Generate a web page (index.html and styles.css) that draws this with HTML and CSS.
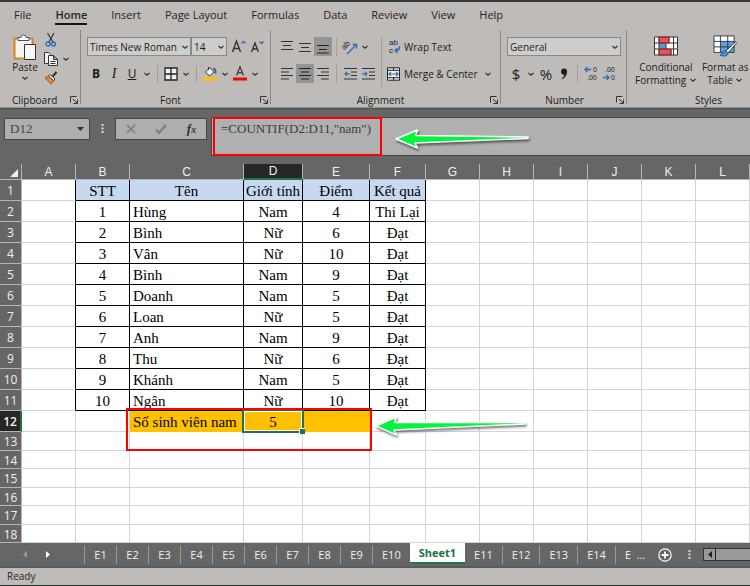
FILE: index.html
```
<!doctype html>
<html lang="vi">
    <head>
        <meta charset="UTF-8" />
        <meta name="viewport" content="width=device-width, initial-scale=1.0" />
        <title>Excel - COUNTIF</title>
        <link rel="stylesheet" href="styles.css">
    </head>
    <body>
        <svg class="defs" width="0" height="0" aria-hidden="true">
            <symbol id="caret" viewBox="0 0 8 8"><path d="M1.500 3L4 5.300 6.500 3" fill="none" stroke="#333" stroke-width="1.200"/></symbol>
            <symbol id="launcher" viewBox="0 0 8 8"><path d="M.5 6.500V.5H6.500M3 3l4 4M7.500 3.500v4h-4" fill="none" stroke="#333"/></symbol>
        </svg>

        <header class="ribbon">
            <nav class="tabs">
                <a href="#">File</a>
                <a href="#" class="active">Home</a>
                <a href="#">Insert</a>
                <a href="#">Page Layout</a>
                <a href="#">Formulas</a>
                <a href="#">Data</a>
                <a href="#">Review</a>
                <a href="#">View</a>
                <a href="#">Help</a>
            </nav>
            <div class="groups">
                <section class="group clipboard">
                    <div class="clip-body">
                        <button class="big">
                            <svg width="24" height="27" viewBox="0 0 24 27">
                                <path d="M1.500 4.500h18v20h-18z" fill="#f3f3f3" stroke="#d9822b" stroke-width="2"/>
                                <path d="M5 6.500V3.500h3a2.500 2.500 0 0 1 5 0h3v3z" fill="#fff" stroke="#555"/>
                                <path d="M11.500 10.500h11v15h-11z" fill="#f4f8f8" stroke="#333"/>
                            </svg>
                            <span>Paste</span>
                            <svg width="8" height="8"><use href="#caret"/></svg>
                        </button>
                        <div class="clip-tools">
                            <button class="tool" aria-label="Cut">
                                <svg width="12" height="14" viewBox="0 0 12 14" fill="none">
                                    <path d="M2.500 0l6 10M9 0L3.500 10" stroke="#333" stroke-width="1.200"/>
                                    <circle cx="3" cy="11" r="2" stroke="#2b6cb8" stroke-width="1.300"/>
                                    <circle cx="8.500" cy="11" r="2" stroke="#2b6cb8" stroke-width="1.300"/>
                                </svg>
                            </button>
                            <div class="row">
                                <button class="tool" aria-label="Copy">
                                    <svg width="14" height="14" viewBox="0 0 14 14" fill="#f3f3f3" stroke="#333">
                                        <path d="M4 11.500H.5V.5h4l2 2"/>
                                        <path d="M4.500 3.500h5l4 4v6h-9zM9.500 3.500v4h4M6.500 9.500h5M6.500 11.500h5"/>
                                    </svg>
                                </button>
                                <button class="caret" aria-label="Copy options"><svg width="8" height="8"><use href="#caret"/></svg></button>
                            </div>
                            <button class="tool" aria-label="Format Painter">
                                <svg width="14" height="14" viewBox="0 0 14 14">
                                    <path d="M1 7l4-2.500 5 5L7 13z" fill="#e8873a" stroke="#a8561c"/>
                                    <path d="M4.500 5L6 3.500l5 4.500-1.500 1.500z" fill="#fff" stroke="#333"/>
                                    <path d="M8.500 5.500L12.500 1" stroke="#333" stroke-width="2"/>
                                </svg>
                            </button>
                        </div>
                    </div>
                    <footer><span>Clipboard</span><svg width="8" height="8"><use href="#launcher"/></svg></footer>
                </section>

                <section class="group font">
                    <div class="rows">
                        <div class="row">
                            <span class="combo font-name">
                                <select aria-label="Font"><option>Times New Roman</option></select>
                                <svg width="8" height="8"><use href="#caret"/></svg>
                            </span>
                            <span class="combo font-size">
                                <select aria-label="Font size"><option>14</option></select>
                                <svg width="8" height="8"><use href="#caret"/></svg>
                            </span>
                            <button class="tool grow" aria-label="Increase font size">
                                <svg width="14" height="16" viewBox="0 0 14 16" fill="none"><path d="M.5 13L4.500 2l4 11M2 9.500h5" stroke="#333" stroke-width="1.400"/><path d="M9.500 4.500l2-2 2 2" stroke="#2b6cb8" stroke-width="1.300"/></svg>
                            </button>
                            <button class="tool" aria-label="Decrease font size">
                                <svg width="14" height="16" viewBox="0 0 14 16" fill="none"><path d="M1.500 13L5 4l3.500 9M3 10h4" stroke="#333" stroke-width="1.300"/><path d="M9.500 2.500l2 2 2-2" stroke="#2b6cb8" stroke-width="1.300"/></svg>
                            </button>
                        </div>
                        <div class="row">
                            <button class="tool"><b>B</b></button>
                            <button class="tool serif"><i>I</i></button>
                            <button class="tool"><u>U</u></button>
                            <button class="caret" aria-label="Underline options"><svg width="8" height="8"><use href="#caret"/></svg></button>
                            <i class="sep"></i>
                            <button class="tool" aria-label="Borders">
                                <svg width="14" height="14" viewBox="0 0 14 14"><path d="M1 1h12v12H1zM7 1v12M1 7h12" fill="#f1f1f1" stroke="#222" stroke-width="1.300"/></svg>
                            </button>
                            <button class="caret" aria-label="Border options"><svg width="8" height="8"><use href="#caret"/></svg></button>
                            <i class="sep"></i>
                            <button class="tool" aria-label="Fill colour">
                                <svg width="14" height="15" viewBox="0 0 14 15">
                                    <path d="M2.500 6L7 1.500l4 4.500L6.500 10z" fill="#f4f4f4" stroke="#333"/>
                                    <path d="M5.500 4V1" stroke="#333"/>
                                    <path d="M10 2.500c2.500 0 3 2 2.500 5" fill="none" stroke="#2b4f9e" stroke-width="1.600"/>
                                    <path d="M0 11.500h14v3H0z" fill="#ffc000"/>
                                </svg>
                            </button>
                            <button class="caret" aria-label="Fill options"><svg width="8" height="8"><use href="#caret"/></svg></button>
                            <button class="tool" aria-label="Font colour">
                                <svg width="14" height="15" viewBox="0 0 14 15"><path d="M3.500 9.500L7 .8l3.500 8.700M4.800 6.800h4.400" fill="none" stroke="#333" stroke-width="1.200"/><path d="M0 11.500h14v3H0z" fill="#f00000"/></svg>
                            </button>
                            <button class="caret" aria-label="Font colour options"><svg width="8" height="8"><use href="#caret"/></svg></button>
                        </div>
                    </div>
                    <footer><span>Font</span><svg width="8" height="8"><use href="#launcher"/></svg></footer>
                </section>

                <section class="group alignment">
                    <div class="split">
                        <div class="rows">
                            <div class="row">
                                <button class="tool" aria-label="Top align"><svg width="12" height="14" viewBox="0 0 12 14"><path d="M0 1.500h12M2 5.500h8M0 9.500h12" stroke="#333" stroke-width="1.200"/></svg></button>
                                <button class="tool" aria-label="Middle align"><svg width="12" height="14" viewBox="0 0 12 14"><path d="M0 3.500h12M2 7.500h8M0 11.500h12" stroke="#333" stroke-width="1.200"/></svg></button>
                                <button class="tool on" aria-label="Bottom align"><svg width="12" height="14" viewBox="0 0 12 14"><path d="M0 5.500h12M2 9.500h8M0 13h12" stroke="#222" stroke-width="1.200"/></svg></button>
                                <i class="sep"></i>
                                <button class="tool" aria-label="Orientation">
                                    <svg width="16" height="16" viewBox="0 0 16 16">
                                        <g transform="rotate(-45 5 7)"><text class="ic ab" x="0" y="8">ab</text></g>
                                        <path d="M5 15L14 6M10.500 5.500h4v4" fill="none" stroke="#2b6cb8" stroke-width="1.300"/>
                                    </svg>
                                </button>
                                <button class="caret" aria-label="Orientation options"><svg width="8" height="8"><use href="#caret"/></svg></button>
                            </div>
                            <div class="row">
                                <button class="tool" aria-label="Align left"><svg width="12" height="14" viewBox="0 0 12 14"><path d="M0 1.500h12M0 5h8M0 8.500h12M0 12h8" stroke="#333" stroke-width="1.200"/></svg></button>
                                <button class="tool on" aria-label="Center"><svg width="12" height="14" viewBox="0 0 12 14"><path d="M0 1.500h12M2 5h8M0 8.500h12M2 12h8" stroke="#222" stroke-width="1.200"/></svg></button>
                                <button class="tool" aria-label="Align right"><svg width="12" height="14" viewBox="0 0 12 14"><path d="M0 1.500h12M4 5h8M0 8.500h12M4 12h8" stroke="#333" stroke-width="1.200"/></svg></button>
                                <i class="sep"></i>
                                <button class="tool" aria-label="Decrease indent"><svg width="13" height="14" viewBox="0 0 13 14" fill="none"><path d="M0 1.500h13M7 5h6M7 8.500h6M0 12h13" stroke="#333" stroke-width="1.200"/><path d="M6 6.800H1M3 4.800l-2 2 2 2" stroke="#2b6cb8" stroke-width="1.200"/></svg></button>
                                <button class="tool" aria-label="Increase indent"><svg width="13" height="14" viewBox="0 0 13 14" fill="none"><path d="M0 1.500h13M7 5h6M7 8.500h6M0 12h13" stroke="#333" stroke-width="1.200"/><path d="M0 6.800h5M3 4.800l2 2-2 2" stroke="#2b6cb8" stroke-width="1.200"/></svg></button>
                            </div>
                        </div>
                        <i class="sep tall"></i>
                        <div class="rows">
                            <button class="wide">
                                <svg width="18" height="17" viewBox="0 0 18 17">
                                    <text class="ic ab" x="3" y="7">ab</text><text class="ic ab" x="3" y="15">c</text>
                                    <path d="M13.500 8v1.500q0 3-3 3H9M11.500 10l-2.500 2.500 2.500 2.500" fill="none" stroke="#2b6cb8" stroke-width="1.300"/>
                                </svg>
                                <span>Wrap Text</span>
                            </button>
                            <div class="row">
                                <button class="wide">
                                    <svg width="18" height="14" viewBox="0 0 18 14">
                                        <path d="M1.500 .8h12v12.400h-12z" fill="#f4f4f4" stroke="#222"/>
                                        <path d="M1.500 3.300h12M1.500 10.700h12M7.500 .8v2.500M7.500 10.700v2.500" stroke="#222"/>
                                        <path d="M2.500 7h10M5 4.800L2.800 7 5 9.200M10 4.800L12.200 7 10 9.200" fill="none" stroke="#2b6cb8" stroke-width="1.200"/>
                                    </svg>
                                    <span>Merge &amp; Center</span>
                                </button>
                                <button class="caret" aria-label="Merge options"><svg width="8" height="8"><use href="#caret"/></svg></button>
                            </div>
                        </div>
                    </div>
                    <footer><span>Alignment</span><svg width="8" height="8"><use href="#launcher"/></svg></footer>
                </section>

                <section class="group number">
                    <div class="rows">
                        <div class="row">
                            <span class="combo format">
                                <select aria-label="Number format"><option>General</option></select>
                                <svg width="8" height="8"><use href="#caret"/></svg>
                            </span>
                        </div>
                        <div class="row">
                            <button class="tool sign">$</button>
                            <button class="caret" aria-label="Currency options"><svg width="8" height="8"><use href="#caret"/></svg></button>
                            <button class="tool sign">%</button>
                            <button class="tool" aria-label="Comma style">
                                <svg width="8" height="12" viewBox="0 0 8 12"><path d="M4 .5a3 3 0 0 1 3 3.300c0 3.500-2 6-5 7.400l-.5-.8c1.800-1 2.700-2.200 2.800-3.700A3 3 0 1 1 4 .5z" fill="#1c1c1c"/></svg>
                            </button>
                            <i class="sep"></i>
                            <button class="tool" aria-label="Increase decimal">
                                <svg width="16" height="17" viewBox="0 0 16 17"><text class="ic" x="10" y="7">0</text><text class="ic" x="4" y="15">.00</text><path d="M8 4.500H2M4.500 2L2 4.500 4.500 7" fill="none" stroke="#2b6cb8" stroke-width="1.300"/></svg>
                            </button>
                            <button class="tool" aria-label="Decrease decimal">
                                <svg width="16" height="17" viewBox="0 0 16 17"><text class="ic" x="4" y="7">.00</text><text class="ic" x="10" y="15">0</text><path d="M2 12.500h6M5.500 10L8 12.500 5.500 15" fill="none" stroke="#2b6cb8" stroke-width="1.300"/></svg>
                            </button>
                        </div>
                    </div>
                    <footer><span>Number</span><svg width="8" height="8"><use href="#launcher"/></svg></footer>
                </section>

                <section class="group styles">
                    <div class="style-body">
                        <button class="big">
                            <svg width="24" height="20" viewBox="0 0 24 20">
                                <path d="M.5 1h23v18H.5z" fill="#fff"/>
                                <path d="M5 1h10v6H5zM5 13h12v6H5z" fill="#e0565b"/>
                                <path d="M5 7h7v6H5z" fill="#4f9bdc"/>
                                <path d="M.5 1h23v18H.5zM.5 7h23M.5 13h23M5 1v18M15 1v6M12 7v6M17 13v6M19.500 1v18" fill="none" stroke="#333"/>
                                <path d="M5 1h10v6H5zM5 13h12v6H5z" fill="none" stroke="#b3262b"/>
                            </svg>
                            <span>Conditional<br>Formatting <svg width="8" height="8"><use href="#caret"/></svg></span>
                        </button>
                        <button class="big">
                            <svg width="26" height="24" viewBox="0 0 26 24">
                                <path d="M1 1h22v18H1z" fill="#fff"/>
                                <path d="M8 7h15v12H8z" fill="#5a9fdd"/>
                                <path d="M1 1h22v18H1zM1 7h22M1 13h22M8 1v18M16 1v18" fill="none" stroke="#333"/>
                                <path d="M24.500 7.500L14 17.500l2 2.500 9.500-11z" fill="#fff" stroke="#333"/>
                                <path d="M14 17c-4 0-3 4-6.500 5 4 2 9 1 8.700-2.500z" fill="#3f8fd6" stroke="#1f5f9f"/>
                            </svg>
                            <span>Format as<br>Table <svg width="8" height="8"><use href="#caret"/></svg></span>
                        </button>
                        <button class="big last">Styles</button>
                    </div>
                    <footer><span>Styles</span></footer>
                </section>
            </div>
        </header>

        <div class="formula-bar">
            <div class="name-box">
                <input type="text" value="D12" aria-label="Name box">
                <svg width="7" height="4" viewBox="0 0 7 4"><path d="M0 0h7L3.500 4z" fill="#333"/></svg>
            </div>
            <svg class="grip" width="3" height="11" viewBox="0 0 3 11"><path d="M.5 1h2v2h-2zM.5 4.500h2v2h-2zM.5 8h2v2h-2z" fill="#ddd"/></svg>
            <div class="fx">
                <button aria-label="Cancel"><svg width="10" height="10" viewBox="0 0 10 10"><path d="M1 1l8 8M9 1L1 9" stroke="#7b7b7b" stroke-width="1.600"/></svg></button>
                <button aria-label="Enter"><svg width="12" height="10" viewBox="0 0 12 10"><path d="M1 5.500L4 9l7-8" fill="none" stroke="#7b7b7b" stroke-width="2"/></svg></button>
                <button class="fn">f<small>x</small></button>
            </div>
            <div class="formula">
                <textarea aria-label="Formula" spellcheck="false">=COUNTIF(D2:D11,"nam")</textarea>
                <div class="mark"></div>
                <svg class="pointer" width="142" height="30" viewBox="0 0 142 30">
                    <path d="M3 13L24.500 4l-2 5.500L135 11v1.500L22 17l2.500 5z" fill="#00f53d" stroke="#fff" stroke-width="1.500" stroke-linejoin="round"/>
                </svg>
            </div>
        </div>

        <main class="sheet">
            <table>
                <colgroup>
                    <col class="c-head"><col class="c-std"><col class="c-std"><col class="c-name"><col class="c-sex"><col class="c-score"><col class="c-result"><col class="c-std"><col class="c-std"><col class="c-std"><col class="c-std"><col class="c-std"><col class="c-std"><col>
                </colgroup>
                <thead id="cols"></thead>
                <tbody id="cells"></tbody>
            </table>
            <div class="mark"></div>
            <svg class="pointer" width="158" height="30" viewBox="0 0 158 30">
                <path d="M3 13L23.500 4l-2 5.500L152 9.500V11L21 17l2.500 5z" fill="#00f53d" stroke="#fff" stroke-width="1.500" stroke-linejoin="round"/>
            </svg>
        </main>

        <div class="sheet-bar">
            <div class="sheet-nav">
                <button aria-label="Previous sheet"><svg width="4" height="7" viewBox="0 0 4 7"><path d="M4 0v7L0 3.500z" fill="#999"/></svg></button>
                <button aria-label="Next sheet"><svg width="4" height="7" viewBox="0 0 4 7"><path d="M0 0v7l4-3.500z" fill="#fff"/></svg></button>
            </div>
            <button class="tab">E1</button>
            <button class="tab">E2</button>
            <button class="tab">E3</button>
            <button class="tab">E4</button>
            <button class="tab">E5</button>
            <button class="tab">E6</button>
            <button class="tab">E7</button>
            <button class="tab">E8</button>
            <button class="tab">E9</button>
            <button class="tab">E10</button>
            <button class="tab current">Sheet1</button>
            <button class="tab">E11</button>
            <button class="tab">E12</button>
            <button class="tab">E13</button>
            <button class="tab">E14</button>
            <button class="tab more">E &nbsp;...</button>
            <button class="add" aria-label="New sheet">
                <svg width="14" height="14" viewBox="0 0 14 14"><path d="M7 3.500v7M3.500 7h7" stroke="#fff" stroke-width="1.800"/><circle cx="7" cy="7" r="6.200" fill="none" stroke="#fff" stroke-width="1.200"/></svg>
            </button>
            <svg class="grip" width="3" height="11" viewBox="0 0 3 11"><path d="M.5 1h2v2h-2zM.5 4.500h2v2h-2zM.5 8h2v2h-2z" fill="#ddd"/></svg>
            <div class="scroll">
                <button aria-label="Scroll left"><svg width="4" height="7" viewBox="0 0 4 7"><path d="M4 0v7L0 3.500z" fill="#222"/></svg></button>
            </div>
        </div>

        <div class="status">Ready</div>

        <script src="script.js"></script>
    </body>
</html>
```
FILE: styles.css
```
* {
    box-sizing: border-box;
}
body {
    margin: 0;
    height: 100vh;
    display: flex;
    flex-direction: column;
    overflow: hidden;
    background: #666;
    font-family: "Open Sans", "Noto Sans", sans-serif;
    font-size: 11px;
    line-height: 14px;
    color: #262626;
}
button,
select,
input,
textarea {
    margin: 0;
    padding: 0;
    border: 0;
    background: none;
    font: inherit;
    color: inherit;
}
svg {
    display: block;
    flex: none;
    overflow: visible;
}
.defs {
    position: absolute;
}
.ic {
    font: 7px "Liberation Sans", sans-serif;
    fill: #222;
}
.ic.ab {
    font-size: 8px;
}

/* ribbon */
.ribbon {
    flex: none;
    background: #bfbbb8;
    border-top: 2px solid #3a3a3a;
    border-bottom: 1px solid #999;
}
.tabs {
    display: flex;
    gap: 24px;
    height: 28px;
    padding: 6px 14px 0;
}
.tabs a {
    height: 17px;
    color: #262626;
    text-decoration: none;
    white-space: nowrap;
}
.tabs .active {
    font-weight: 600;
    border-bottom: 2px solid #1c1010;
}
.groups {
    display: flex;
    height: 77px;
    overflow: hidden;
    font-size: 10px;
    color: #1c1c1c;
}
.group {
    flex: none;
    display: flex;
    flex-direction: column;
    justify-content: space-between;
    position: relative;
    padding-top: 7px;
}
.group::after {
    content: "";
    position: absolute;
    right: 0;
    top: 0;
    bottom: 3px;
    border-right: 1px solid #8a8886;
}
.group footer {
    display: flex;
    align-items: center;
    height: 14px;
    padding: 0 3px 0 12px;
}
.group footer span {
    flex: 1;
    text-align: center;
}
.clipboard {
    width: 81px;
}
.clipboard footer span {
    text-align: left;
}
.font {
    width: 190px;
}
.alignment {
    width: 230px;
}
.font footer,
.alignment footer {
    padding-left: 0;
}
.number {
    width: 126px;
}
.styles {
    width: 163px;
}
.styles footer {
    padding-left: 3px;
}
.rows {
    display: flex;
    flex-direction: column;
    gap: 8px;
}
.group > .rows,
.split {
    padding-left: 7px;
}
.number > .rows,
.font > .rows {
    padding-left: 6px;
}
.row {
    display: flex;
    align-items: center;
    height: 19px;
}
.split {
    display: flex;
}
.tool {
    width: 18px;
    height: 19px;
    display: flex;
    align-items: center;
    justify-content: center;
    font-size: 12px;
}
.tool.on {
    background: #969492;
}
.tool.serif {
    font-family: "Liberation Serif", serif;
    font-size: 14px;
}
.tool.sign {
    font-size: 15px;
}
.tool.grow {
    margin-left: 3px;
}
.caret {
    width: 12px;
    height: 19px;
    display: flex;
    align-items: center;
    justify-content: center;
}
.sep {
    width: 1px;
    height: 18px;
    margin: 0 4px;
    background: #a19e9b;
}
.sep.tall {
    height: 50px;
}
.wide {
    display: flex;
    align-items: center;
    height: 19px;
    white-space: nowrap;
}
.wide + .caret {
    margin-left: 4px;
}
.combo {
    position: relative;
    height: 19px;
}
.combo select {
    appearance: none;
    width: 100%;
    height: 19px;
    padding: 0 2px;
    background: #cfcdcb;
    border: 1px solid #8a8886;
    border-radius: 0;
}
.combo svg {
    position: absolute;
    right: 2px;
    top: 6px;
}
.font-name {
    width: 104px;
}
.font-size {
    width: 36px;
}
.format {
    width: 114px;
}
.big {
    display: flex;
    flex-direction: column;
    align-items: center;
    white-space: nowrap;
    line-height: 13px;
}
.clip-body {
    display: flex;
    gap: 3px;
    padding-left: 11px;
    margin-top: -7px;
}
.clip-body .big {
    width: 28px;
    padding-top: 4px;
}
.clip-tools {
    display: flex;
    flex-direction: column;
}
.style-body {
    display: flex;
    align-items: flex-start;
    gap: 5px;
    padding-left: 8px;
    margin-top: -2px;
}
.style-body .big {
    gap: 4px;
}
.style-body .big svg {
    height: 22px;
}
.style-body .big span svg {
    display: inline-block;
    height: 8px;
}
.style-body .last {
    margin-top: 39px;
}

/* formula bar */
.formula-bar {
    flex: none;
    display: flex;
    align-items: flex-start;
    padding: 8px 0;
    border-top: 1px solid #4a4a4a;
    background: #666;
    font-family: "Liberation Serif", serif;
    font-size: 13px;
}
.name-box {
    position: relative;
    width: 86px;
    height: 22px;
    margin: 1px 0 0 4px;
    background: #aeaeae;
    border: 1px solid #444;
}
.name-box input {
    width: 70px;
    height: 20px;
    padding: 0 5px;
    color: #444;
}
.name-box svg {
    position: absolute;
    right: 5px;
    top: 8px;
}
.formula-bar .grip {
    margin: 6px 11px 0;
}
.fx {
    display: flex;
    justify-content: space-around;
    align-items: center;
    width: 92px;
    height: 22px;
    margin-top: 1px;
    background: #aeaeae;
    border: 1px solid #444;
}
.fn {
    font-style: italic;
    font-weight: bold;
    color: #333;
}
.fn small {
    font-size: 10px;
}
.formula {
    position: relative;
    flex: 1;
    margin-left: 4px;
}
.formula textarea {
    display: block;
    width: 100%;
    height: 39px;
    padding: 3px 9px;
    resize: none;
    background: #b0b0b0;
    border: 1px solid #444;
    border-right: 0;
    color: #3c3c3c;
    line-height: 16px;
}
.mark {
    position: absolute;
    border: 2px solid #f00;
}
.formula .mark {
    left: 2px;
    top: 0;
    width: 169px;
    height: 39px;
}
.pointer {
    position: absolute;
    filter: drop-shadow(1px 2px 1px rgba(0, 0, 0, 0.5));
}
.formula .pointer {
    left: 182px;
    top: 9px;
}

/* cells */
.sheet {
    position: relative;
    flex: 1;
    min-height: 0;
    overflow: hidden;
    background: #fff;
}
.sheet table {
    width: 100%;
    table-layout: fixed;
    border-spacing: 0;
}
.c-head {
    width: 22px;
}
.c-std {
    width: 54px;
}
.c-name {
    width: 114px;
}
.c-sex {
    width: 59px;
}
.c-score {
    width: 67px;
}
.c-result {
    width: 56px;
}
.sheet th,
.sheet td {
    padding: 2px 0 0;
    height: 21px;
    white-space: nowrap;
    border-right: 1px solid #d4d4d4;
    border-bottom: 1px solid #d4d4d4;
}
.sheet th {
    background: #666;
    color: #f0f0f0;
    font-weight: normal;
    border-color: #b5b5b5;
}
.sheet thead th {
    height: 16px;
    padding: 1px 0 0;
    font-family: "Liberation Sans", sans-serif;
    font-size: 12px;
    line-height: 14px;
}
.sheet tbody th {
    font-size: 12px;
}
.sheet td {
    font-family: "Liberation Serif", serif;
    font-size: 15px;
    line-height: 18px;
    color: #000;
    text-align: center;
}
.sheet tr.low td,
.sheet tr.low th {
    height: 18px;
}
.sheet tr.low:nth-child(odd) td,
.sheet tr.low:nth-child(odd) th {
    height: 19px;
}
.sheet th.picked {
    background: #262626;
    font-weight: 600;
}
.sheet thead th.picked {
    font-weight: normal;
    padding: 0;
    border-bottom: 2px solid #217346;
}
.sheet tbody th.picked {
    border-right: 2px solid #217346;
}
.sheet td.edge {
    border-right-color: #000;
}
.sheet td.data {
    border-color: #000;
}
.sheet td.title {
    background: #c6d9f1;
}
.sheet td.left {
    padding-left: 3px;
    text-align: left;
}
.sheet td.sum {
    background: #ffc000;
    border-color: #ffc000;
}
.sheet td.cursor {
    position: relative;
}
.cursor::before {
    content: "";
    position: absolute;
    inset: -2px;
    border: 2px solid #217346;
    box-shadow: inset 0 0 0 1px #fff;
}
.cursor::after {
    content: "";
    position: absolute;
    right: -3px;
    bottom: -3px;
    width: 5px;
    height: 5px;
    background: #217346;
    border: solid #fff;
    border-width: 1px 0 0 1px;
}
.sheet .mark {
    left: 126px;
    top: 244px;
    width: 246px;
    height: 43px;
}
.sheet .pointer {
    left: 373px;
    top: 249px;
}
.corner svg {
    margin: 4px 3px 2px auto;
}

/* sheet tabs */
.sheet-bar {
    flex: none;
    display: flex;
    align-items: center;
    height: 25px;
    background: #666;
    color: #f0f0f0;
    border-bottom: 2px solid #5a5a5a;
}
.sheet-nav {
    display: flex;
    gap: 19px;
    width: 84px;
    padding-left: 23px;
}
.tab {
    height: 18px;
    min-width: 32px;
    padding: 0 9px;
    border-left: 1px solid #999;
    white-space: nowrap;
}
.tab.current {
    height: 21px;
    align-self: flex-start;
    background: #fff;
    color: #217346;
    font-weight: bold;
    border-left: 0;
    border-bottom: 2px solid #217346;
}
.tab.current + .tab {
    border-left: 0;
}
.add {
    margin: 0 16px 0 4px;
}
.scroll {
    flex: 1;
    height: 13px;
    margin-left: 12px;
    background: #999;
    border: 1px solid #333;
    border-right: 0;
}
.scroll button {
    display: flex;
    align-items: center;
    justify-content: center;
    width: 12px;
    height: 11px;
    border-right: 1px solid #222;
}
.status {
    flex: none;
    height: 18px;
    padding: 1px 7px;
    background: #bfbbb8;
    border-bottom: 1px solid #17362c;
    font-size: 10px;
}
```
FILE: script.js
```
const letters = "ABCDEFGHIJKL";
const rows = [
    ["STT", "Tên", "Giới tính", "Điểm", "Kết quả"],
    ["1", "Hùng", "Nam", "4", "Thi Lại"],
    ["2", "Bình", "Nữ", "6", "Đạt"],
    ["3", "Vân", "Nữ", "10", "Đạt"],
    ["4", "Bình", "Nam", "9", "Đạt"],
    ["5", "Doanh", "Nam", "5", "Đạt"],
    ["6", "Loan", "Nữ", "5", "Đạt"],
    ["7", "Anh", "Nam", "9", "Đạt"],
    ["8", "Thu", "Nữ", "6", "Đạt"],
    ["9", "Khánh", "Nam", "5", "Đạt"],
    ["10", "Ngân", "Nữ", "10", "Đạt"],
];
const total = { C: "Số sinh viên nam", D: "5", E: "" };

function cellFor(row, letter) {
    let classes = [];
    let text = "";
    let col = letters.indexOf(letter) - 1;
    if (row <= rows.length) {
        if (letter === "A") classes.push("edge");
        if (col >= 0 && col < 5) {
            text = rows[row - 1][col];
            classes.push("data");
            if (row === 1) classes.push("title");
            else if (letter === "C") classes.push("left");
        }
    } else if (row === 12 && letter in total) {
        text = total[letter];
        classes.push("sum");
        if (letter === "C") classes.push("left");
        if (letter === "D") classes.push("cursor");
    }
    return `<td class="${classes.join(" ")}">${text}</td>`;
}

let head = '<tr><th class="corner"><svg width="8" height="8" viewBox="0 0 8 8"><path d="M8 0v8H0z" fill="#eee"/></svg></th>';
for (let letter of letters) {
    head += `<th class="${letter === "D" ? "picked" : ""}">${letter}</th>`;
}
document.getElementById("cols").innerHTML = head + "<th></th></tr>";

let body = "";
for (let row = 1; row <= 18; row++) {
    body += `<tr class="${row > 12 ? "low" : ""}"><th class="${row === 12 ? "picked" : ""}">${row}</th>`;
    for (let letter of letters) {
        body += cellFor(row, letter);
    }
    body += "<td></td></tr>";
}
document.getElementById("cells").innerHTML = body;
```
